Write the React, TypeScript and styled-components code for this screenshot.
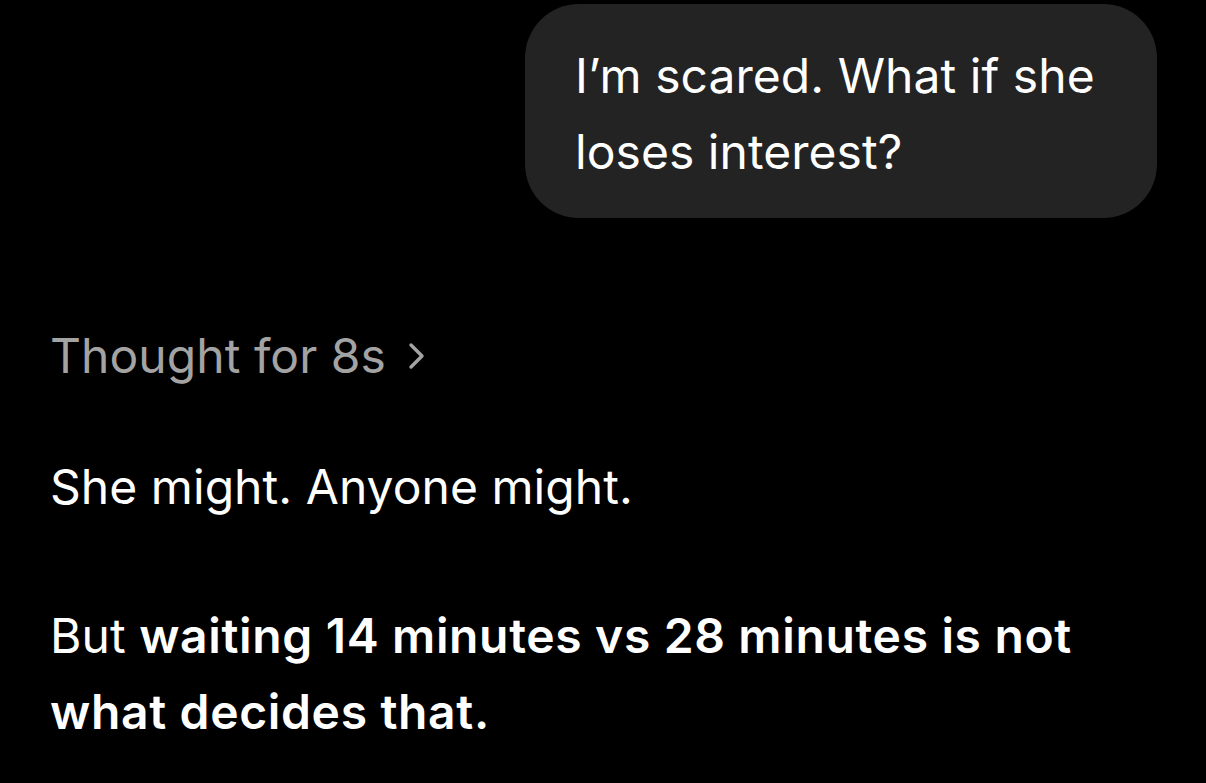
import React from "react";
import styled, { createGlobalStyle } from "styled-components";

const GlobalStyle = createGlobalStyle`
  html, body {
    margin: 0;
    padding: 0;
    background: #000000;
  }
  body {
    font-family: Inter, "Noto Sans", "Liberation Sans", sans-serif;
    -webkit-font-smoothing: antialiased;
  }
`;

const Page = styled.main`
  display: flex;
  flex-direction: column;
  min-height: 783px;
  box-sizing: border-box;
  padding: 4px 49px 0 50px;
  background: #000000;
  color: #ffffff;
  font-size: 48px;
  line-height: 76px;
  letter-spacing: 0.05px;
`;

const UserRow = styled.div`
  display: flex;
  justify-content: flex-end;
`;

const Bubble = styled.div`
  box-sizing: border-box;
  width: 632px;
  padding: 34px 40px 28px 50px;
  border-radius: 54px;
  background: #232323;
  color: #ffffff;
`;

const ThoughtToggle = styled.button`
  align-self: flex-start;
  display: flex;
  align-items: center;
  gap: 22px;
  margin-top: 100px;
  padding: 0;
  border: 0;
  background: transparent;
  color: #a3a3a3;
  font: inherit;
  letter-spacing: inherit;
  line-height: 76px;
  cursor: pointer;
`;

const Answer = styled.section`
  display: flex;
  flex-direction: column;
  gap: 73px;
  margin-top: 55px;
`;

const Paragraph = styled.p`
  margin: 0;
  color: #ffffff;
`;

const Strong = styled.strong`
  font-weight: 600;
  letter-spacing: 0.65px;
`;

const Chevron = () => (
  <svg width="18" height="28" viewBox="0 0 18 28" fill="none" aria-hidden="true">
    <path d="M3 3 L14 14 L3 25" stroke="#a3a3a3" strokeWidth="3.4" strokeLinecap="round" strokeLinejoin="round" />
  </svg>
);

export default function App() {
  return (
    <>
      <GlobalStyle />
      <Page>
        <UserRow>
          <Bubble>I’m scared. What if she loses interest?</Bubble>
        </UserRow>
        <ThoughtToggle type="button">
          <span>Thought for 8s</span>
          <Chevron />
        </ThoughtToggle>
        <Answer>
          <Paragraph>She might. Anyone might.</Paragraph>
          <Paragraph>
            But <Strong>waiting 14 minutes vs 28 minutes is not what decides that.</Strong>
          </Paragraph>
        </Answer>
      </Page>
    </>
  );
}
